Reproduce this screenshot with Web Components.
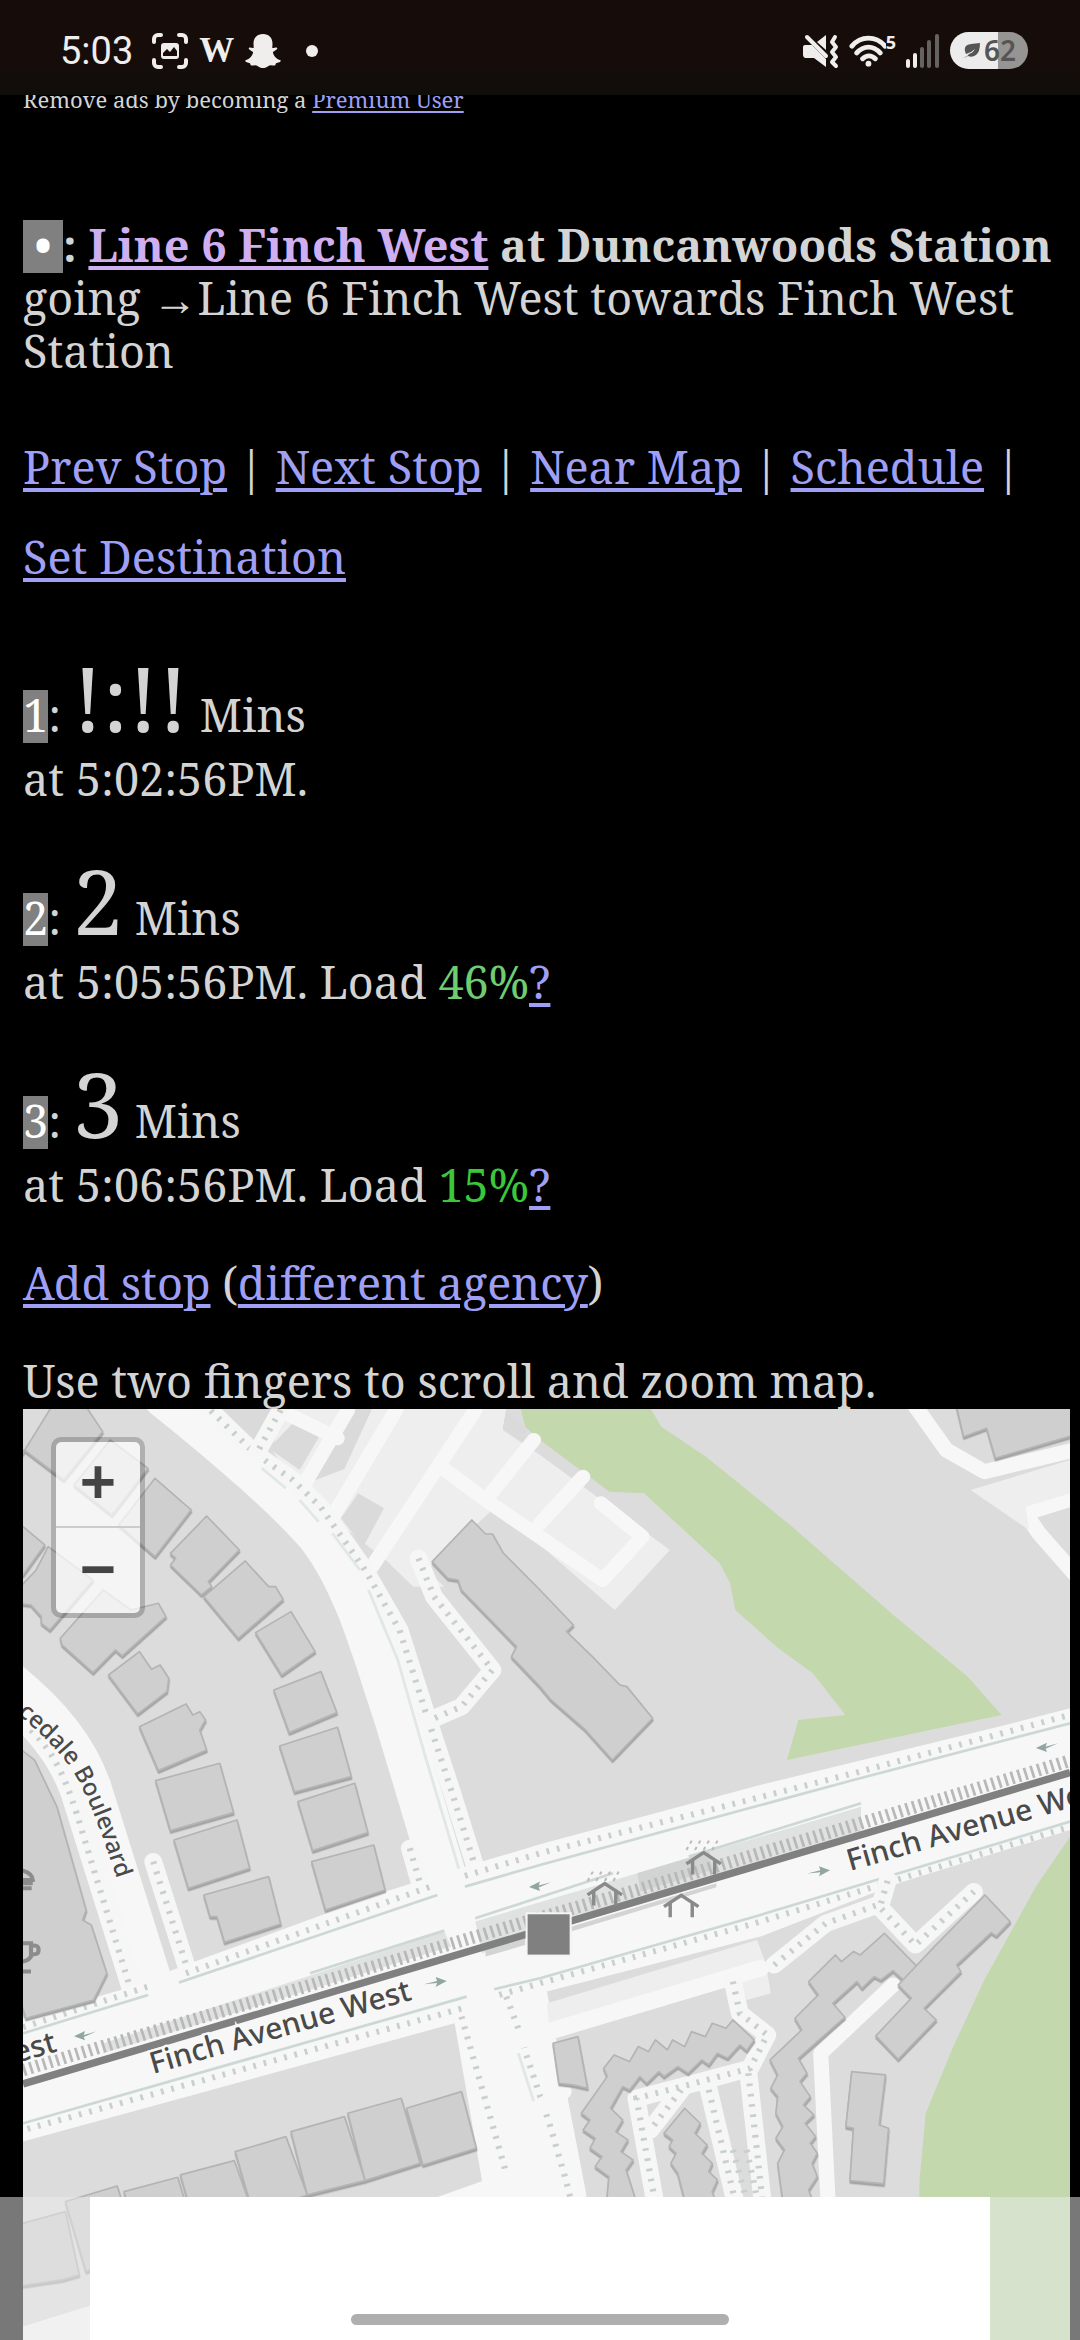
<!DOCTYPE html>
<html lang="en">
<head>
<meta charset="utf-8">
<meta name="viewport" content="width=device-width, initial-scale=1">
<title>Line 6 Finch West at Duncanwoods Station</title>
<style>
  html, body {
    margin: 0;
    background: #000;
  }
  body {
    color: #d4d4d4;
    font-family: "Noto Serif", "Liberation Serif", "DejaVu Serif", serif;
    font-size: 45px;
    line-height: 53px;
    height: 100vh;
    overflow: hidden;
  }
</style>
</head>
<body>
<stop-page></stop-page>

<script>
const linkStyles = `
  a { color: #9f9ff6; text-decoration-thickness: 4px; text-underline-offset: 4px; }
  a.visited { color: #d0aef2; }
  .key {
    display: inline-block;
    padding-bottom: 4px;
    margin-bottom: -4px;
    background: #808080;
    color: #fff;
    line-height: 49px;
  }
`;

class StatusBar extends HTMLElement {
  connectedCallback() {
    this.attachShadow({ mode: 'open' });
    this.shadowRoot.innerHTML = `
      <style>
        :host {
          display: flex;
          justify-content: space-between;
          align-items: center;
          box-sizing: border-box;
          height: 95px;
          padding: 6px 52px 0 60px;
          background: linear-gradient(#160c0a 60%, #100e0a);
          color: #f0eeec;
          font: 38px/40px Roboto, "Noto Sans", sans-serif;
        }
        .side { display: flex; align-items: center; gap: 11px; }
        .side.right { gap: 10px; }
        .time { margin-right: 8px; }
        .w { font: bold 35px/36px "Liberation Serif", serif; }
        .dot { width: 12px; height: 12px; margin-left: 14px; border-radius: 50%; background: #f0eeec; }
        .wifi { display: flex; align-items: flex-start; }
        .wifi span { font: bold 18px/14px "Noto Sans", sans-serif; }
        .battery {
          display: flex;
          align-items: center;
          justify-content: center;
          gap: 4px;
          width: 78px;
          height: 37px;
          border-radius: 19px;
          background: linear-gradient(to right, #ececec 62%, #979593 62%);
          color: #555;
          font: 600 28px/37px "Noto Sans", sans-serif;
        }
        svg { display: block; }
      </style>
      <div class="side">
        <span class="time">5:03</span>
        <svg width="36" height="36" viewBox="0 0 36 36" fill="none" stroke="#f0eeec" stroke-width="4" stroke-linecap="round">
          <path d="M2 9V6a4 4 0 0 1 4-4h3M27 2h3a4 4 0 0 1 4 4v3M34 27v3a4 4 0 0 1-4 4h-3M9 34H6a4 4 0 0 1-4-4v-3"/>
          <rect x="9" y="10" width="18" height="16" rx="3" fill="#f0eeec" stroke="none"/>
          <path d="M11 23v-3l4-4 3 3 4-5 3 4v5z" fill="#160c0a" stroke="none"/>
        </svg>
        <span class="w">W</span>
        <svg width="36" height="36" viewBox="0 0 36 36" fill="#f0eeec">
          <path d="M18 1c6 0 9.500 4 9.500 9.500l-.2 4.500c1.500.5 3.400-1 4.600-.3 1.500 1.200-1.800 2.800-4 4.300.3 3.500 3.200 7.200 7.800 8.300.3 1.900-2.700 2.500-4.700 3-.5 1-.2 2.200-1.700 2.200-1.900 0-3.800-.8-6 .4C21.500 34.300 20.200 35 18 35s-3.500-.7-5.300-2.100c-2.200-1.200-4.100-.4-6-.4-1.500 0-1.200-1.200-1.700-2.200-2-.5-5-1.100-4.700-3C4.900 26.200 7.800 22.500 8.100 19c-2.200-1.500-5.500-3.100-4-4.300 1.200-.7 3.100.8 4.600.3l-.2-4.500C8.500 5 12 1 18 1z"/>
        </svg>
        <span class="dot"></span>
      </div>
      <div class="side right">
        <svg width="36" height="36" viewBox="0 0 36 36" fill="#f0eeec">
          <path d="M2 12h7l14 14v8L11 25H2q-2-1-2-3v-8q0-2 2-2zM14 9l9-7v15z"/>
          <path d="M4 4l19 19" stroke="#f0eeec" stroke-width="4" stroke-linecap="round"/>
          <path d="M32 4l-3 5 4 5-4 5 4 5-4 5 4 4" fill="none" stroke="#f0eeec" stroke-width="4" stroke-linecap="round" stroke-linejoin="round"/>
        </svg>
        <div class="wifi">
          <svg width="37" height="32" viewBox="0 0 38 32" fill="none" stroke="#f0eeec" stroke-width="5" stroke-linecap="round">
            <path d="M3 11c9-11 25-11 34 0M8 18c7-8 17-8 24 0M14 24c4-4 9-4 13 0"/>
            <circle cx="20" cy="29" r="3" fill="#f0eeec" stroke="none"/>
          </svg>
          <span>5</span>
        </div>
        <svg width="34" height="36" viewBox="0 0 34 36" stroke-width="4" stroke-linecap="round">
          <path d="M2 28v5M9 22v11" stroke="#f0eeec"/>
          <path d="M16 16v17M23 9v24M31 3v30" stroke="#66625f"/>
        </svg>
        <div class="battery">
          <svg width="18" height="16" viewBox="0 0 18 16"><path d="M0 15q5-1 7-4 4-1 6-5-4 4-9 5Q0 2 9 1L18 0q0 9-4 12-4 3-8 1-3 2-6 2z" fill="#555"/></svg>
          <span>62</span>
        </div>
      </div>
    `;
  }
}
customElements.define('status-bar', StatusBar);

class StopHeading extends HTMLElement {
  connectedCallback() {
    this.attachShadow({ mode: 'open' });
    this.shadowRoot.innerHTML = `
      <style>
        :host { display: block; }
        h1 { display: inline; margin: 0; font-size: inherit; font-weight: bold; }
        ${linkStyles}
        .key { padding-left: 11px; padding-right: 11px; }
      </style>
      <h1><span class="key">•</span>: <a class="visited" href="#route">Line 6 Finch West</a> at Duncanwoods Station</h1><br>
      <slot></slot>
    `;
  }
}
customElements.define('stop-heading', StopHeading);

class StopLinks extends HTMLElement {
  connectedCallback() {
    const names = this.getAttribute('names').split(',');
    this.attachShadow({ mode: 'open' });
    this.shadowRoot.innerHTML = `
      <style>
        :host { display: block; line-height: 90px; }
        a { white-space: nowrap; }
        ${linkStyles}
      </style>
      <nav>${names.map(name => `<a href="#">${name}</a>`).join(' | ')}</nav>
    `;
  }
}
customElements.define('stop-links', StopLinks);

class ArrivalTime extends HTMLElement {
  connectedCallback() {
    const load = this.getAttribute('load');
    this.attachShadow({ mode: 'open' });
    this.shadowRoot.innerHTML = `
      <style>
        :host { display: block; }
        .wait { height: 105px; line-height: 100px; }
        .mins { font-size: 90px; }
        .load { color: var(--load-color); }
        ${linkStyles}
      </style>
      <div class="wait"><span class="key">${this.getAttribute('key')}</span>: <span class="mins">${this.getAttribute('mins')}</span> Mins</div>
      <div>at ${this.getAttribute('at')}.${load ? ` Load <span class="load">${load}</span><a href="#load">?</a>` : ''}</div>
    `;
  }
}
customElements.define('arrival-time', ArrivalTime);

class StopMap extends HTMLElement {
  connectedCallback() {
    this.attachShadow({ mode: 'open' });
    this.shadowRoot.innerHTML = `
      <style>
        :host { display: block; position: relative; overflow: hidden; background: #dcdcdc; }
        .map { display: block; width: 100%; height: 100%; }
        .zoom {
          position: absolute;
          top: 28px;
          left: 28px;
          border: 5px solid rgba(0, 0, 0, 0.2);
          border-radius: 10px;
          background-clip: padding-box;
        }
        button {
          display: block;
          width: 84px;
          height: 85px;
          margin: 0;
          padding: 0 0 6px;
          border: 0;
          background: rgba(255, 255, 255, 0.7);
          color: #444;
          font: bold 58px/78px "DejaVu Sans Mono", monospace;
        }
        button:first-child { border-bottom: 2px solid #ccc; border-radius: 6px 6px 0 0; height: 86px; }
        button:last-child { border-radius: 0 0 6px 6px; }
        .park { fill: #c3d8ad; }
        .lot { fill: #eee; }
        .road { fill: #f6f7f6; }
        .street { fill: none; stroke: #f6f7f6; stroke-linejoin: round; stroke-linecap: round; }
        .walk { fill: none; stroke: #f6f6f6; stroke-width: 52; stroke-linecap: round; stroke-linejoin: round; }
        .dots { fill: none; stroke: #c8d0ce; stroke-width: 18; stroke-dasharray: 8 23; }
        .curb { fill: none; stroke: #ccd8d5; stroke-width: 8; }
        .faint { opacity: 0.5; }
        .houses { fill: #cfcfcf; stroke: #b4b4b4; stroke-width: 5; stroke-linejoin: round; }
        .arrow { fill: #8fa6a2; }
        .shelter { fill: none; stroke: #8a8a8a; stroke-width: 10; }
        .rain { fill: none; stroke: #bbb; stroke-width: 6; stroke-dasharray: 10 12; }
        .poi { fill: none; stroke: #8c8c8c; stroke-width: 12; }
        text {
          fill: #4a4a4a;
          font-family: "Noto Sans", "Open Sans", sans-serif;
          font-weight: 500;
          paint-order: stroke;
          stroke: #f8f8f8;
          stroke-width: 5px;
        }
        .name { font-size: 30px; }
        .side-name { font-size: 24px; }
      </style>
      <svg class="map" viewBox="23 19 1047 931" preserveAspectRatio="xMidYMin slice" role="img" aria-label="Map of the stop">
        <defs>
          <filter id="drop" x="-5%" y="-5%" width="110%" height="110%">
            <feDropShadow dx="1" dy="7" stdDeviation="2" flood-color="#a4a4a4"/>
          </filter>
          <g id="left-arrow" class="arrow"><path d="M-32 4l32-16-4 12 36-10-36 16 4 10z"/></g>
          <g id="right-arrow" class="arrow"><path d="M32-4L0-16l4 12-38 10 38-4-4 12z"/></g>
          <path id="shelter" d="M-50 12L0-22 50 12M-32 0v44M32 0v44"/>
          <path id="rain" d="M-50-30l20-36M-25-30l20-36M0-30l20-36M25-30l20-36"/>
        </defs>

        <g transform="scale(.3444 .3333)">
          <!-- parks -->
          <path class="park" d="M1512 57H1890L1920 110 2050 200 2300 410 2600 680 2810 860 2908 975 2285 1110 2318 990 2455 975 2360 850 2260 775 2135 660 2120 580 2090 520 1870 310 1770 305 1568 150 1525 110z"/>
          <path class="park" d="M3107 1340L3008 1490 2858 1770 2768 1970 2688 2170 2670 2370 2660 2850H3107z"/>

          <!-- parking lots, top -->
          <path class="lot" d="M820 57H1470L1460 120 1568 195 1945 480 1785 660 1440 350 1240 540 1290 590 1200 590 1120 510 960 380 860 290 790 180z"/>
          <path d="M640 57h200l-80 110zM860 90l70 45-60 105-90-65zM1010 57h70l-80 180-100 40zM1470 60l60 60-10 40-60-45zM1040 310l75 45-60 115-65-85z" fill="#dadada"/>
          <path class="street" stroke-width="42" d="M1010 60L880 290M830 70l150 75M1150 60L960 390M1380 60L1080 530M1280 230l130 100 340 240 115-130-120-100M1410 330l140-180M1568 400l125-140"/>
          <path class="street" stroke-width="45" d="M2655 45l93 135 110 65 260-65M3117 325l-140 45 40 60 110 130"/>
          <path class="lot" d="M2818 300l290-90v100l-130 40 10 70z"/>

          <!-- side streets -->
          <path class="street" stroke-width="130" d="M480 20C650 160 840 330 930 440 1040 590 1090 800 1150 980 1190 1120 1230 1260 1330 1600"/>
          <path class="street" stroke-width="150" d="M10 880C130 980 210 1080 250 1200L450 1860"/>
          <path class="walk" d="M590 40L740 190 850 270 930 350 1060 540 1160 720 1240 980 1310 1200 1380 1430"/>
          <path class="dots" d="M590 40L740 190 850 270 930 350 1060 540 1160 720 1240 980 1310 1200 1380 1430"/>
          <path class="curb faint" d="M760 235l70 60M870 330l55 65M965 430l80 110M1070 600l85 210 80 290 110 380"/>
          <path class="walk" d="M815 60L745 190M1215 505L1260 620 1430 840 1340 950 1250 990M445 1415L545 1740M1190 1375L1225 1500M60 980C150 1070 210 1150 260 1330L390 1800"/>
          <path class="dots" d="M815 60L745 190M1215 505L1260 620 1430 840 1340 950 1250 990M445 1415L545 1740M1190 1375L1225 1500M90 1020C160 1090 195 1170 240 1330L380 1800"/>

          <!-- Finch Avenue -->
          <path class="road" d="M67 1885L350 1800 560 1717 1120 1505 1400 1415 1568 1363 2188 1190 2908 1008 3107 955V1320L2608 1480 2208 1640 1588 1805 1700 2400 1760 2850H1480L1320 1900 67 2255z"/>
          <path class="road" d="M1480 2850L1450 2355 1260 2425 67 2810V2850z"/>
          <path class="curb" d="M67 1930L430 1815M520 1778L1270 1515M1350 1490L1568 1425 2478 1170 3107 1000M67 2200L1355 1820M1435 1798L1568 1765 2208 1575 3107 1295"/>
          <path class="dots" d="M67 1912L430 1790M540 1750L1250 1490M1350 1458L1568 1390 2478 1150 3107 975M80 2217L1360 1850M1450 1815L1568 1780 2208 1595 3107 1310"/>
          <path class="dots" d="M1340 1880L1470 2350M1470 1820L1510 1930 1530 2000 1598 2210 1643 2370 1670 2480"/>
          <path class="curb faint" d="M1505 1990l45 145"/>

          <!-- light rail and its platforms -->
          <path fill="#e0e2e1" d="M300 1960L1290 1625 1310 1670 300 1990zM1380 1595L2500 1250 2500 1330 1400 1690z"/>
          <path fill="#d2d4d3" d="M1850 1450L2060 1385 2070 1440 1860 1505zM1660 1610L2080 1480 2080 1492 1660 1624zM1410 1680L1525 1645V1665L1410 1700z"/>
          <path d="M67 2040L1525 1596 1850 1500 3107 1112" fill="none" stroke="#b8b8b8" stroke-width="38" stroke-dasharray="8 12"/>
          <path d="M1380 1585L1780 1450M900 1750L1290 1622M2000 1400L2500 1240" class="curb"/>
          <path d="M67 2082L3107 1148" fill="none" stroke="#808080" stroke-width="22"/>
          <use href="#left-arrow" x="247" y="1935"/>
          <use href="#right-arrow" x="1265" y="1777"/>
          <use href="#left-arrow" x="1568" y="1487"/>
          <use href="#right-arrow" x="2378" y="1445"/>
          <use href="#left-arrow" x="3040" y="1070"/>
          <g class="shelter">
            <use href="#shelter" x="1756" y="1503"/>
            <use href="#shelter" x="2043" y="1410"/>
            <use href="#shelter" x="1978" y="1538"/>
          </g>
          <g class="rain">
            <use href="#rain" x="1756" y="1503"/>
            <use href="#rain" x="2043" y="1410"/>
          </g>

          <!-- houses -->
          <g class="houses" filter="url(#drop)">
            <path d="M60 200L150 50H250L298 125 185 270 70 180z"/>
            <path d="M320 150L430 235 325 375 215 285z"/>
            <path d="M450 265L555 360 450 500 345 405z"/>
            <path d="M600 378L695 480 605 575 615 590 585 615 495 525 510 505 495 490z"/>
            <path d="M712 513L780 590 800 590 822 628 692 745 592 620z"/>
            <path d="M845 665L915 785 818 855 742 728z"/>
            <path d="M932 845L978 968 840 1028 795 900z"/>
            <path d="M980 1012L1020 1160 855 1206 812 1068z"/>
            <path d="M865 1235L1030 1180 1068 1328 908 1382z"/>
            <path d="M905 1415L1085 1365 1118 1500 945 1560z"/>
            <path d="M452 1172L638 1120 678 1268 495 1322z"/>
            <path d="M505 1350L688 1290 725 1435 547 1495z"/>
            <path d="M592 1515L780 1460 815 1602 652 1657 630 1580 610 1580z"/>
            <path d="M50 395L130 465 67 555 50 560z"/>
            <path d="M140 470L270 570 145 720 120 700V680L90 645 50 640V600L105 540z"/>
            <path d="M175 745L300 600 380 660 460 640 482 680 355 798 335 780 270 848 180 765z"/>
            <path d="M405 785L440 838 465 825 490 865 485 905 400 972 315 855z"/>
            <path d="M405 1010L540 942 560 975 580 965 597 990 580 1020 600 1080 460 1142z"/>
            <path d="M50 1070L100 1110 165 1250 250 1560 240 1590 265 1605 310 1750 272 1830 75 1885 50 1800z"/>
            <path d="M1370 390L1410 432 1430 432 1462 490 1568 600 1665 705 1645 725 1720 800 1800 885 1820 890 1895 985 1778 1110 1700 1020 1600 930 1568 890 1485 800 1500 770 1425 690 1340 600 1330 570 1300 565 1255 515z"/>
            <path d="M2775 40L2798 140 2865 115 2890 205 3120 135V40z"/>
            <path d="M1180 2155L1340 2105 1383 2275 1228 2325z"/>
            <path d="M1010 2170L1165 2125 1220 2320 1060 2372z"/>
            <path d="M845 2225L1000 2180 1060 2372 892 2415z"/>
            <path d="M683 2285L830 2240 892 2415 735 2470z"/>
            <path d="M524 2355L680 2312 735 2470 570 2520z"/>
            <path d="M360 2405L516 2362 565 2530 410 2580z"/>
            <path d="M190 2435L340 2388 400 2580 250 2645z"/>
            <path d="M50 2505L190 2465 230 2655 180 2670 50 2690z"/>
          </g>

          <!-- apartments south of Finch -->
          <g transform="translate(1568 1170)">
            <path class="lot" d="M20 670L630 480 655 550 670 640 600 660 580 610 30 780z"/>
            <path class="street" stroke-width="50" d="M-90 790L640 565"/>
            <path class="street" stroke-width="44" d="M1025 615L815 820 838 1300M70 935L-20 990"/>
            <path class="walk" d="M680 555L830 430 980 375 1090 495 1260 335M990 370L1010 300M560 605L580 700 660 765 610 865 430 915 280 955 340 1300M490 930L575 1300M605 880L650 1300M410 930L320 1050"/>
            <path class="dots" d="M680 555L830 430 980 375 1090 495 1260 335M990 370L1010 300M560 605L580 700 660 765 610 865 430 915 280 955 340 1300M490 930L575 1300M605 880L650 1300M410 930L320 1050"/>
            <path class="dots" stroke-width="40" d="M560 1110L610 1300M600 1110L640 1300"/>
            <g class="houses" filter="url(#drop)">
              <path d="M38 790L110 770 138 925 95 915 55 910z"/>
              <path d="M560 720L540 745 500 730 480 770 440 755 420 800 385 780 370 810 335 780 315 815 285 800 260 845 215 825 185 865 195 890 120 1000 145 1020 125 1050 160 1075 145 1105 180 1130 160 1160 200 1190 190 1300H290L250 1170 270 1140 235 1115 255 1080 220 1055 240 1020 205 985 240 920 260 930 290 890 310 910 345 875 360 890 400 860 430 880 470 840 490 855 515 820 545 835 580 795 600 812 622 780z"/>
              <path d="M420 985L465 1030 450 1060 485 1095 470 1120 500 1150 490 1175 515 1200 500 1235 520 1300H430L400 1180 380 1150 395 1120 375 1100 385 1080 360 1060z"/>
              <path d="M1000 460L1095 560 1060 605 1025 572 990 600 970 590 935 625 920 605 850 670 885 712 750 835 775 880 755 905 785 950 765 975 795 1005 770 1030 800 1070 785 1090 805 1120 790 1150 805 1190 780 1230 805 1300H710L690 1150 710 1110 685 1075 705 1040 685 1000 690 950 670 925 690 885 668 840 760 750 740 715 808 645 780 605 858 525 875 545 910 515 930 525z"/>
              <path d="M1292 345L1365 425 1325 468 1310 458 1210 555 1222 575 1115 685 1150 720 1040 838 975 768 1078 655 1040 615 1145 500z"/>
              <path d="M905 875L1003 885 985 1035 1012 1045 998 1212 900 1202 910 1045 888 1040z"/>
            </g>
          </g>

          <!-- restaurant and cafe, cut by the map edge -->
          <path class="poi" d="M60 1440q35 10 35 30H60M60 1480h35M60 1495h32M60 1660h30v40q-10 15-30 15M90 1668q22-5 22 12t-22 12M60 1745h30"/>

          <rect x="1529" y="1570" width="128" height="127" fill="#808080" stroke="#f4f4f4" stroke-width="6"/>
        </g>

        <text class="name" transform="translate(153 684) rotate(-16)">Finch Avenue West</text>
        <text class="name" transform="translate(850 481) rotate(-16)">Finch Avenue West</text>
        <text class="name" text-anchor="end" transform="translate(58 661) rotate(-16)">West</text>
        <path id="boulevard" d="M-14 300L20 326C46 348 68 370 79 392 90 412 103 447 117 489" fill="none"/>
        <text class="side-name"><textPath href="#boulevard" startOffset="100%" text-anchor="end">ncedale Boulevard</textPath></text>
      </svg>
      <div class="zoom">
        <button aria-label="Zoom in">+</button>
        <button aria-label="Zoom out">−</button>
      </div>
    `;
  }
}
customElements.define('stop-map', StopMap);

// Half-transparent strip with the banner slot and the gesture handle
class BottomBanner extends HTMLElement {
  connectedCallback() {
    this.attachShadow({ mode: 'open' });
    this.shadowRoot.innerHTML = `
      <style>
        :host { display: block; height: 143px; padding: 0 90px; background: rgba(236, 236, 236, 0.51); }
        .banner { display: flex; align-items: flex-end; justify-content: center; height: 100%; background: #fff; }
        .handle { width: 42%; height: 11px; margin-bottom: 15px; border-radius: 6px; background: #afafaf; }
      </style>
      <div class="banner"><div class="handle"></div></div>
    `;
  }
}
customElements.define('bottom-banner', BottomBanner);

class StopPage extends HTMLElement {
  connectedCallback() {
    this.attachShadow({ mode: 'open' });
    this.shadowRoot.innerHTML = `
      <style>
        :host { display: block; height: 100%; }
        status-bar { position: fixed; top: 0; left: 0; right: 0; z-index: 2; }
        bottom-banner { position: fixed; bottom: 0; left: 0; right: 0; z-index: 2; }
        main {
          display: flex;
          flex-direction: column;
          gap: 45px;
          box-sizing: border-box;
          height: 100%;
          padding: 86px 10px 0 23px;
        }
        .ads { margin: 0 0 60px; font-size: 22px; line-height: 27px; }
        .ads a { text-decoration-thickness: 2px; text-underline-offset: 3px; }
        p { margin: 0; }
        .map { display: flex; flex-direction: column; flex: 1; gap: 2px; min-height: 0; }
        stop-map { flex: 1; min-height: 0; }
        ${linkStyles}
      </style>
      <status-bar></status-bar>
      <main>
        <p class="ads">Remove ads by becoming a <a href="#premium">Premium User</a></p>
        <stop-heading>going →Line 6 Finch West towards Finch West Station</stop-heading>
        <stop-links names="Prev Stop,Next Stop,Near Map,Schedule,Set Destination"></stop-links>
        <arrival-time key="1" mins="!:!!" at="5:02:56PM"></arrival-time>
        <arrival-time key="2" mins="2" at="5:05:56PM" load="46%" style="--load-color: #70cc70"></arrival-time>
        <arrival-time key="3" mins="3" at="5:06:56PM" load="15%" style="--load-color: #3ac83a"></arrival-time>
        <p><a href="#add">Add stop</a> (<a href="#agency">different agency</a>)</p>
        <div class="map">
          <p>Use two fingers to scroll and zoom map.</p>
          <stop-map></stop-map>
        </div>
      </main>
      <bottom-banner></bottom-banner>
    `;
  }
}
customElements.define('stop-page', StopPage);
</script>
</body>
</html>
